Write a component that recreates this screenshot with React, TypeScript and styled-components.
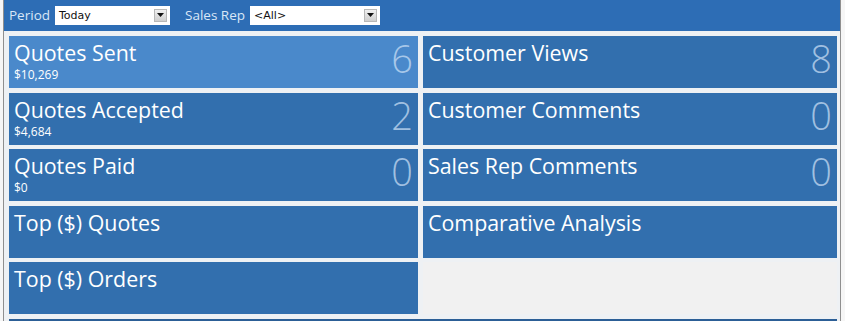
import styled, { createGlobalStyle } from "styled-components";

const GlobalStyle = createGlobalStyle`
  html, body {
    margin: 0;
    padding: 0;
    background: #f6f6f6;
    overflow: hidden;
  }
  body {
    font-family: "Open Sans", "Noto Sans", sans-serif;
  }
`;

type TileData = {
  title: string;
  sub?: string;
  count?: number;
  highlight?: boolean;
};

const tiles: TileData[] = [
  { title: "Quotes Sent", sub: "$10,269", count: 6, highlight: true },
  { title: "Customer Views", count: 8 },
  { title: "Quotes Accepted", sub: "$4,684", count: 2 },
  { title: "Customer Comments", count: 0 },
  { title: "Quotes Paid", sub: "$0", count: 0 },
  { title: "Sales Rep Comments", count: 0 },
  { title: "Top ($) Quotes" },
  { title: "Comparative Analysis" },
  { title: "Top ($) Orders" },
];

const Dropdown = ({ value, width }: { value: string; width: number }) => (
  <Select $width={width}>
    <SelectValue>{value}</SelectValue>
    <SelectButton>
      <svg width="7" height="4" viewBox="0 0 7 4">
        <path d="M0 0h7L3.5 4z" fill="#111" />
      </svg>
    </SelectButton>
  </Select>
);

const App = () => {
  return (
    <>
      <GlobalStyle />
      <Frame>
        <Toolbar>
          <Label>Period</Label>
          <Dropdown value="Today" width={115} />
          <Label $gap>Sales Rep</Label>
          <Dropdown value="<All>" width={130} />
        </Toolbar>
        <Board>
          {tiles.map((t) => (
            <Tile key={t.title} $highlight={t.highlight}>
              <TileText>
                <TileTitle>{t.title}</TileTitle>
                {t.sub && <TileSub>{t.sub}</TileSub>}
              </TileText>
              {t.count !== undefined && <Count>{t.count}</Count>}
            </Tile>
          ))}
          <Empty />
          <BottomBar />
        </Board>
      </Frame>
    </>
  );
};

export default App;

const Frame = styled.div`
  margin-left: 3px;
  width: 836px;
  height: 321px;
  overflow: hidden;
  border-left: 1px solid #8f8f8f;
  border-right: 1px solid #8f8f8f;
  background: #eef1f4;
  display: flex;
  flex-direction: column;
`;

const Toolbar = styled.div`
  height: 31px;
  background: #2d6db5;
  display: flex;
  align-items: center;
  padding: 0 0 1px 5px;
  box-sizing: border-box;
  flex-shrink: 0;
`;

const Label = styled.span<{ $gap?: boolean }>`
  color: #d9e7f7;
  font-size: 13.5px;
  margin-left: ${(p) => (p.$gap ? "15px" : "0")};
  margin-right: 5px;
`;

const Select = styled.div<{ $width: number }>`
  width: ${(p) => p.$width}px;
  height: 19px;
  background: #fff;
  display: flex;
  align-items: center;
  justify-content: space-between;
  padding: 0 3px 0 4px;
  box-sizing: border-box;
`;

const SelectValue = styled.span`
  font-family: "DejaVu Sans", sans-serif;
  font-size: 11px;
  color: #111;
`;

const SelectButton = styled.div`
  width: 13px;
  height: 13px;
  background: linear-gradient(#f0f0f0, #cfcfcf);
  border: 1px solid #b8b8b8;
  box-sizing: border-box;
  display: flex;
  align-items: center;
  justify-content: center;
`;

const Board = styled.div`
  display: grid;
  grid-template-columns: 409px 414px;
  grid-auto-rows: 52px;
  column-gap: 5px;
  row-gap: 4.5px;
  padding: 5px 0 0 5px;
`;

const Tile = styled.div<{ $highlight?: boolean }>`
  background: ${(p) => (p.$highlight ? "#4a89cb" : "#326fae")};
  display: flex;
  justify-content: space-between;
  align-items: flex-start;
  padding: 2.4px 5px 0 5px;
  box-sizing: border-box;
  color: #fff;
`;

const TileText = styled.div`
  display: flex;
  flex-direction: column;
`;

const TileTitle = styled.div`
  font-size: 21.4px;
  line-height: 29px;
`;

const TileSub = styled.div`
  font-size: 12px;
  line-height: 16.3px;
`;

const Count = styled.div`
  font-size: 38px;
  line-height: 52px;
  margin-top: -6.1px;
  font-weight: 300;
  color: rgba(205, 224, 246, 0.72);
`;

const Empty = styled.div`
  background: #f1f1f1;
`;

const BottomBar = styled.div`
  grid-column: 1 / -1;
  background: #2c5f96;
`;
